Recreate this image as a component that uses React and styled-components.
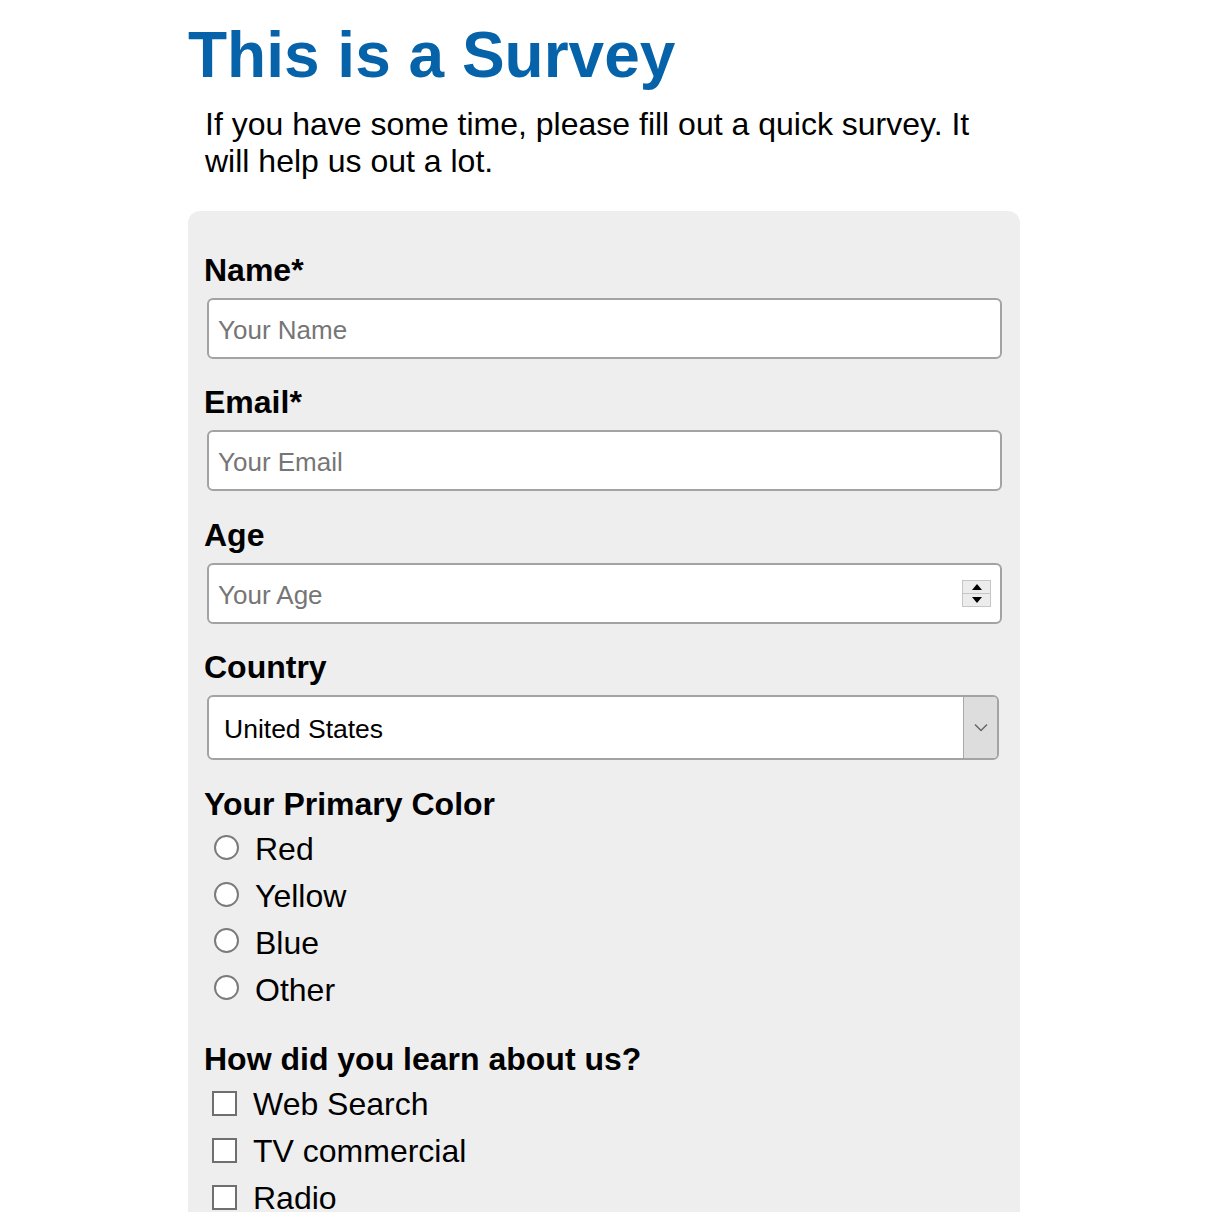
import React from "react";
import styled, { createGlobalStyle, css } from "styled-components";

const GlobalStyle = createGlobalStyle`
  html, body {
    margin: 0;
    padding: 0;
    background: #ffffff;
  }
  body {
    font-family: "Liberation Sans", Arial, sans-serif;
    font-size: 32px;
    color: #000000;
  }
`;

const Page = styled.main`
  width: 832px;
  margin-left: 188px;
`;

const Title = styled.h1`
  margin: 18px 0 0;
  font-size: 64px;
  font-weight: 700;
  line-height: normal;
  color: #0663aa;
`;

const Intro = styled.p`
  margin: 14px 0 0;
  padding: 0 14px 0 17px;
  font-size: 32px;
  line-height: normal;
`;

const Form = styled.form`
  margin-top: 31px;
  background: #eeeeee;
  border-radius: 12px;
  padding: 40.5px 16px 40px;
`;

const Field = styled.div`
  margin-bottom: 25.6px;
`;

const titleText = css`
  display: block;
  margin: 0;
  font-size: 32px;
  font-weight: 700;
  line-height: normal;
`;

const FieldLabel = styled.label`
  ${titleText}
`;

const GroupTitle = styled.p`
  ${titleText}
`;

const controlFont = css`
  font-family: "Liberation Sans", Arial, sans-serif;
  font-size: 26px;
`;

const InputShell = styled.div`
  position: relative;
  margin: 9px 0 0 3px;
  width: 795px;
`;

const TextInput = styled.input`
  display: block;
  box-sizing: border-box;
  width: 100%;
  height: 61px;
  margin: 0;
  padding: 4px 9px 0;
  border: 2px solid #a3a3a3;
  border-radius: 6px;
  background: #ffffff;
  outline: none;
  color: #000;
  ${controlFont}
  &::placeholder {
    color: #767676;
  }
`;

const Spinner = styled.div`
  position: absolute;
  top: 17px;
  right: 11px;
  width: 29px;
  height: 27px;
  display: flex;
  flex-direction: column;
`;

const SpinHalf = styled.div`
  flex: 1;
  display: flex;
  align-items: center;
  justify-content: center;
  background: #ececec;
  border: 1px solid #c6c6c6;
  & + & {
    border-top: none;
  }
`;

const Arrow = styled.span`
  width: 0;
  height: 0;
  border-left: 5px solid transparent;
  border-right: 5px solid transparent;
  ${(p) =>
    p.$up
      ? css`border-bottom: 6px solid #000;`
      : css`border-top: 6px solid #000;`}
`;

const SelectShell = styled.div`
  display: flex;
  box-sizing: border-box;
  margin: 9px 0 0 3px;
  width: 792px;
  height: 65px;
  border: 2px solid #a3a3a3;
  border-radius: 6px;
  background: #ffffff;
  overflow: hidden;
`;

const Select = styled.select`
  flex: 1;
  appearance: none;
  -webkit-appearance: none;
  border: none;
  outline: none;
  background: transparent;
  margin: 0;
  padding: 2px 0 0 15px;
  color: #000;
  ${controlFont}
  font-size: 26.5px;
`;

const SelectButton = styled.div`
  width: 33px;
  display: flex;
  align-items: center;
  justify-content: center;
  background: #dddddd;
  border-left: 1px solid #a9a9a9;
`;

const OptionGroup = styled.div`
  margin: 3.5px 0 27.5px;
`;

const Option = styled.label`
  display: flex;
  align-items: center;
  height: 46.8px;
  font-size: 32px;
  line-height: normal;
`;

const Radio = styled.input.attrs({ type: "radio" })`
  appearance: none;
  -webkit-appearance: none;
  box-sizing: border-box;
  width: 25px;
  height: 25px;
  margin: 0 16px 5px 10px;
  border: 2px solid #7b7b7b;
  border-radius: 50%;
  background: #ffffff;
  flex-shrink: 0;
`;

const Checkbox = styled.input.attrs({ type: "checkbox" })`
  appearance: none;
  -webkit-appearance: none;
  box-sizing: border-box;
  width: 25px;
  height: 25px;
  margin: 0 16px 3px 8px;
  border: 2px solid #6f6f6f;
  border-radius: 0;
  background: #ffffff;
  flex-shrink: 0;
`;

const colors = ["Red", "Yellow", "Blue", "Other"];
const sources = ["Web Search", "TV commercial", "Radio"];

export default function App() {
  return (
    <>
      <GlobalStyle />
      <Page>
        <Title>This is a Survey</Title>
        <Intro>
          If you have some time, please fill out a quick survey. It will help us
          out a lot.
        </Intro>
        <Form onSubmit={(e) => e.preventDefault()}>
          <Field>
            <FieldLabel htmlFor="name">Name*</FieldLabel>
            <InputShell>
              <TextInput id="name" type="text" placeholder="Your Name" />
            </InputShell>
          </Field>
          <Field>
            <FieldLabel htmlFor="email">Email*</FieldLabel>
            <InputShell>
              <TextInput id="email" type="email" placeholder="Your Email" />
            </InputShell>
          </Field>
          <Field>
            <FieldLabel htmlFor="age">Age</FieldLabel>
            <InputShell>
              <TextInput id="age" type="text" inputMode="numeric" placeholder="Your Age" />
              <Spinner aria-hidden="true">
                <SpinHalf>
                  <Arrow $up />
                </SpinHalf>
                <SpinHalf>
                  <Arrow />
                </SpinHalf>
              </Spinner>
            </InputShell>
          </Field>
          <Field>
            <FieldLabel htmlFor="country">Country</FieldLabel>
            <SelectShell>
              <Select id="country" defaultValue="us">
                <option value="us">United States</option>
                <option value="ca">Canada</option>
                <option value="mx">Mexico</option>
              </Select>
              <SelectButton aria-hidden="true">
                <svg width="14" height="9" viewBox="0 0 14 9">
                  <polyline
                    points="1,1.5 7,7.5 13,1.5"
                    fill="none"
                    stroke="#666"
                    strokeWidth="1.5"
                  />
                </svg>
              </SelectButton>
            </SelectShell>
          </Field>
          <GroupTitle>Your Primary Color</GroupTitle>
          <OptionGroup>
            {colors.map((c) => (
              <Option key={c}>
                <Radio name="color" value={c} />
                {c}
              </Option>
            ))}
          </OptionGroup>
          <GroupTitle>How did you learn about us?</GroupTitle>
          <OptionGroup>
            {sources.map((s) => (
              <Option key={s}>
                <Checkbox value={s} />
                {s}
              </Option>
            ))}
          </OptionGroup>
        </Form>
      </Page>
    </>
  );
}
